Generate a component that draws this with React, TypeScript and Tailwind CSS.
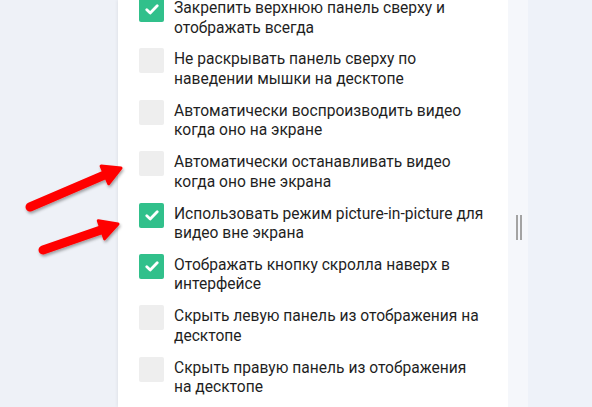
import React from 'react';

interface Item {
  label: string;
  checked: boolean;
}

const items: Item[] = [
  { label: 'Закрепить верхнюю панель сверху и отображать всегда', checked: true },
  { label: 'Не раскрывать панель сверху по наведении мышки на десктопе', checked: false },
  { label: 'Автоматически воспроизводить видео когда оно на экране', checked: false },
  { label: 'Автоматически останавливать видео когда оно вне экрана', checked: false },
  { label: 'Использовать режим picture-in-picture для видео вне экрана', checked: true },
  { label: 'Отображать кнопку скролла наверх в интерфейсе', checked: true },
  { label: 'Скрыть левую панель из отображения на десктопе', checked: false },
  { label: 'Скрыть правую панель из отображения на десктопе', checked: false },
];

const Checkbox: React.FC<{ checked: boolean }> = ({ checked }) => (
  <div
    className={
      checked
        ? 'w-[25px] h-[25px] shrink-0 rounded-[2px] bg-[#31c08b] flex items-center justify-center'
        : 'w-[25px] h-[25px] shrink-0 rounded-[2px] bg-[#eeeeee]'
    }
  >
    {checked && (
      <svg width="14" height="11" viewBox="0 0 14 11">
        <path d="M1.8 5.8 L5.2 9 L12.2 1.8" fill="none" stroke="#fff" strokeWidth="2.8" strokeLinecap="round" strokeLinejoin="round" />
      </svg>
    )}
  </div>
);

// red annotation arrows drawn over the left gutter
const Arrow: React.FC<{ x1: number; y1: number; x2: number; y2: number }> = ({ x1, y1, x2, y2 }) => {
  const ang = Math.atan2(y2 - y1, x2 - x1);
  const len = 20;
  const spread = 0.5;
  const bx = x2 - Math.cos(ang) * 12;
  const by = y2 - Math.sin(ang) * 12;
  const p1 = [x2 - Math.cos(ang - spread) * len, y2 - Math.sin(ang - spread) * len];
  const p2 = [x2 - Math.cos(ang + spread) * len, y2 - Math.sin(ang + spread) * len];
  return (
    <g>
      <line x1={x1} y1={y1} x2={bx} y2={by} stroke="#ff0000" strokeWidth="9" strokeLinecap="round" />
      <polygon points={`${x2},${y2} ${p1[0]},${p1[1]} ${p2[0]},${p2[1]}`} fill="#ff0000" stroke="#ff0000" strokeWidth="3" strokeLinejoin="round" />
    </g>
  );
};

export default function App() {
  return (
    <div className="relative flex w-[592px] h-[407px] overflow-hidden bg-[#eef2f9]" style={{ fontFamily: 'Roboto, "Noto Sans", sans-serif' }}>
      <div className="w-[118px] shrink-0 bg-[#eef1f7]" />
      <div className="w-[390px] shrink-0 bg-white shadow-[-1px_0_3px_rgba(0,0,0,0.06)]">
        <div className="flex flex-col gap-[10.4px] pl-[21px] mt-[-3px]">
          {items.map((it, i) => (
            <div key={i} className="flex gap-[10px]">
              <Checkbox checked={it.checked} />
              <div className="w-[312px] pt-[2px] text-[15.6px] leading-[19.5px] text-[#1f1f1f]">{it.label}</div>
            </div>
          ))}
        </div>
      </div>
      <div className="w-[20px] shrink-0 bg-[#f5f7fb] flex justify-center pt-[215px]">
        <div className="flex gap-[2px] h-[25px] ml-[2px]">
          <div className="w-[2px] h-full bg-[#a3a3a3]" />
          <div className="w-[2px] h-full bg-[#a3a3a3]" />
        </div>
      </div>
      <svg className="absolute left-0 top-0" width="140" height="300">
        <defs>
          <filter id="sh" x="-20%" y="-20%" width="140%" height="160%">
            <feDropShadow dx="1" dy="2" stdDeviation="1.5" floodColor="#000" floodOpacity="0.35" />
          </filter>
        </defs>
        <g filter="url(#sh)">
          <Arrow x1={30} y1={207} x2={121} y2={168} />
          <Arrow x1={43} y1={250} x2={118} y2={224} />
        </g>
      </svg>
    </div>
  );
}
